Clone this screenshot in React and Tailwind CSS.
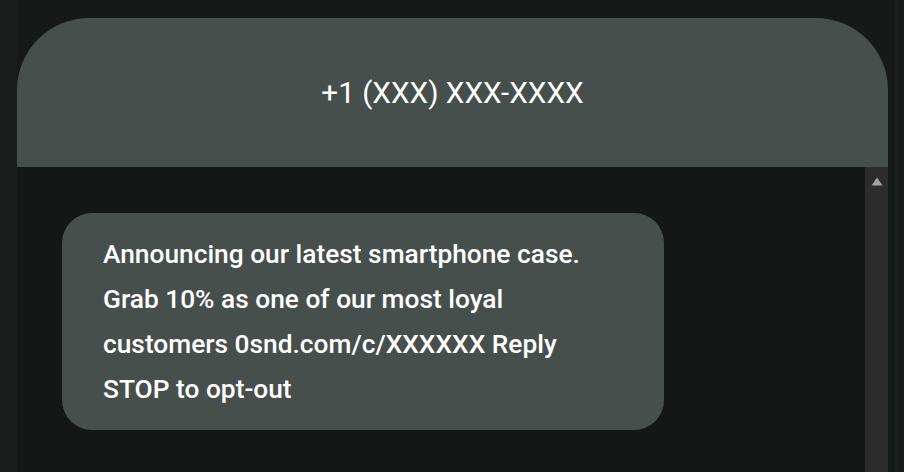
import React from 'react';

const message =
  'Announcing our latest smartphone case. Grab 10% as one of our most loyal customers 0snd.com/c/XXXXXX Reply STOP to opt-out';

export default function App() {
  return (
    <div className="h-screen w-full flex bg-[#151918] overflow-hidden" style={{ fontFamily: 'Roboto, "Noto Sans", sans-serif' }}>
      {/* left gutter */}
      <div className="w-[17px] shrink-0 bg-[#1a1e1d]" />

      {/* phone preview */}
      <div className="w-[871px] shrink-0 flex flex-col pt-[18px]">
        <header className="h-[149px] shrink-0 bg-[#474f4d] rounded-t-[72px] flex items-center justify-center">
          <h1 className="text-white text-[29.7px] font-normal leading-none">+1 (XXX) XXX-XXXX</h1>
        </header>

        <div className="flex-1 flex bg-[#131716]">
          <div className="flex-1 pt-[46px] pl-[45px]">
            <div className="w-[602px] bg-[#474f4d] rounded-[30px] pl-[41px] pr-[36px] pt-[19px] pb-[18px]">
              <p className="text-white text-[26.3px] font-medium leading-[45px]">{message}</p>
            </div>
          </div>

          {/* scrollbar */}
          <div className="w-[23px] shrink-0 bg-[#2c2c2c] flex justify-center pt-[10px]">
            <svg width="12" height="9" viewBox="0 0 12 9">
              <path d="M6 0.5 L11.5 8.5 L0.5 8.5 Z" fill="#a3a3a3" />
            </svg>
          </div>
        </div>
      </div>

      {/* right edge */}
      <div className="flex-1 flex">
        <div className="w-[6px] bg-[#151918]" />
        <div className="w-[5px] bg-[#1a1e1d]" />
        <div className="flex-1 bg-[#161a19]" />
      </div>
    </div>
  );
}
